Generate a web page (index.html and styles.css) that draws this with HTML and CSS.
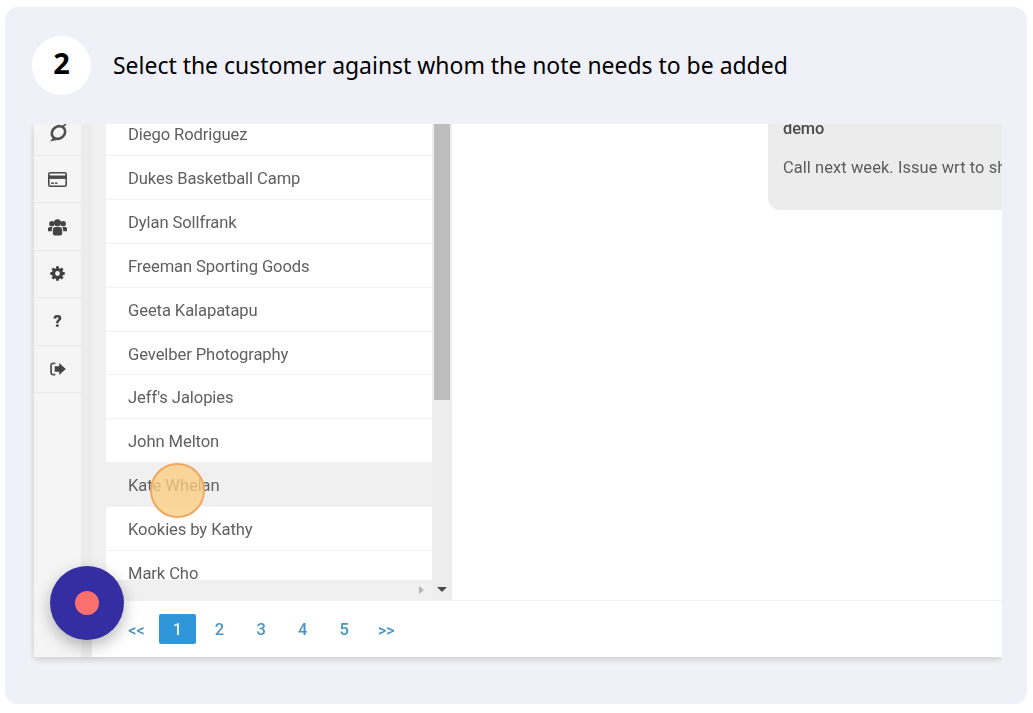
FILE: index.html
```html
<!DOCTYPE html>
<html lang="en">
<head>
    <meta charset="UTF-8">
    <meta name="viewport" content="width=device-width, initial-scale=1.0">
    <title>Step 2</title>
    <link rel="stylesheet" href="styles.css">
</head>
<body>

<div class="card">
    <!-- Step heading -->
    <div class="step-head">
        <div class="step-num">2</div>
        <div class="step-text">Select the customer against whom the note needs to be added</div>
    </div>

    <!-- Captured screen -->
    <div class="shot">
        <div class="app">
            <div class="sidebar">
                <div class="side-item side-first">
                    <svg width="20" height="20" viewBox="0 0 20 20"><ellipse cx="10.5" cy="9.5" rx="7" ry="6" transform="rotate(-35 10.5 9.5)" fill="none" stroke="#505050" stroke-width="2.6"/><path d="M5.5 14 2 18.5 9 17Z" fill="#505050"/><path d="M14 4 18 1" stroke="#505050" stroke-width="1.6"/></svg>
                </div>
                <div class="side-item">
                    <svg width="19" height="15" viewBox="0 0 19 15"><rect x="0.8" y="0.8" width="17.4" height="13.4" rx="1.5" fill="#f5f5f5" stroke="#4a4a4a" stroke-width="1.6"/><rect x="1" y="3.5" width="17" height="3.4" fill="#4a4a4a"/><rect x="3" y="10.5" width="3" height="1.4" fill="#4a4a4a"/><rect x="7" y="10.5" width="2.5" height="1.4" fill="#4a4a4a"/></svg>
                </div>
                <div class="side-item side-users">
                    <svg width="19" height="17" viewBox="0 0 18 16" fill="#444"><circle cx="3.6" cy="4.4" r="2.5"/><circle cx="14.4" cy="4.4" r="2.5"/><circle cx="9" cy="3.6" r="3.4"/><path d="M0 11.5V9C0 8 1 7.5 2 7.5H4.5C3.8 8.5 3.6 9.5 3.6 11.5Z"/><path d="M18 11.5V9C18 8 17 7.5 16 7.5H13.5C14.2 8.5 14.4 9.5 14.4 11.5Z"/><path d="M4.6 14V10.5C4.6 8.5 5.6 7.5 7 7.5H11C12.4 7.5 13.4 8.5 13.4 10.5V14C13.4 15 12.5 15.6 11.5 15.6H6.5C5.5 15.6 4.6 15 4.6 14Z"/></svg>
                </div>
                <div class="side-item">
                    <svg width="15" height="15" viewBox="0 0 15 15"><circle cx="7.5" cy="7.5" r="4" fill="none" stroke="#3f3f3f" stroke-width="3.2"/><path d="M7.5 0.3V3M7.5 12V14.7M0.3 7.5H3M12 7.5H14.7M2.4 2.4 4.3 4.3M10.7 10.7 12.6 12.6M2.4 12.6 4.3 10.7M10.7 4.3 12.6 2.4" stroke="#3f3f3f" stroke-width="2.8"/></svg>
                </div>
                <div class="side-item side-help">?</div>
                <div class="side-item">
                    <svg width="16" height="14" viewBox="0 0 15 13" fill="#444"><path d="M5 1.2H3C1.6 1.2 1 2 1 3.2V9.8C1 11 1.6 11.8 3 11.8H5" fill="none" stroke="#555" stroke-width="1.7"/><path d="M8.6 0.8 14.8 6.5 8.6 12.2V9H4.4V4H8.6Z"/></svg>
                </div>
            </div>

            <div class="panel">
                <div class="panel-main">
                    <div class="customer-col">
                        <ul class="customer-list">
                            <li>Diego Rodriguez</li>
                            <li>Dukes Basketball Camp</li>
                            <li>Dylan Sollfrank</li>
                            <li>Freeman Sporting Goods</li>
                            <li>Geeta Kalapatapu</li>
                            <li>Gevelber Photography</li>
                            <li>Jeff's Jalopies</li>
                            <li>John Melton</li>
                            <li class="hovered">Kate Whelan</li>
                            <li>Kookies by Kathy</li>
                            <li>Mark Cho</li>
                        </ul>
                        <div class="h-scroll">
                            <span class="arrow-right"></span>
                        </div>
                    </div>
                    <div class="v-scroll">
                        <div class="v-thumb"></div>
                        <span class="arrow-down"></span>
                    </div>
                    <div class="notes">
                        <div class="note">
                            <div class="note-author">demo</div>
                            <div class="note-body">Call next week. Issue wrt to sh</div>
                        </div>
                    </div>
                </div>
                <div class="pager">
                    <span class="page-link page-edge">&lt;&lt;</span>
                    <span class="page-link page-on">1</span>
                    <span class="page-link">2</span>
                    <span class="page-link">3</span>
                    <span class="page-link">4</span>
                    <span class="page-link">5</span>
                    <span class="page-link page-edge">&gt;&gt;</span>
                </div>
            </div>
        </div>
    </div>

    <!-- Click marker and recorder button lie over the capture -->
    <div class="click-mark"></div>
    <div class="rec-btn"><span class="rec-dot"></span></div>
</div>

</body>
</html>
```

FILE: styles.css
```css
html, body { margin: 0; padding: 0; background: #fff; }
body { padding: 7px 6px 9px 5px; font-family: "Noto Sans", sans-serif; }

.card { position: relative; height: 697px; background: #eff0f8; border-radius: 13px; overflow: hidden; }

.step-head { display: flex; align-items: center; height: 117px; padding: 0 0 0 27px; box-sizing: border-box; }
.step-num { width: 59px; height: 59px; margin-top: -1px; padding-bottom: 5px; box-sizing: border-box; border-radius: 50%; background: #fff; display: flex; align-items: center; justify-content: center; font-size: 29px; font-weight: 700; color: #000; }
.step-text { margin: -1px 0 0 22px; font-size: 22.94px; color: #000; }

.shot { margin: 0 25px; height: 543px; background: #f3f3f5; overflow: hidden; font-family: Roboto, sans-serif; filter: blur(0.35px); }
.app { display: flex; height: 533px; margin-left: 4px; background: #ececec; box-shadow: 0 2px 8px rgba(0, 0, 0, 0.18); }

.sidebar { width: 47px; flex: none; background: #f5f5f5; }
.side-item { height: 47.4px; border-bottom: 1px solid #e8e8e8; box-sizing: border-box; display: flex; align-items: center; justify-content: center; }
.side-first { height: 32px; padding-bottom: 14px; }
.side-users { padding-top: 2px; }
.side-help { font-size: 17px; font-weight: 900; color: #444; }

.panel { flex: 1; margin-left: 11px; background: #fff; display: flex; flex-direction: column; min-width: 0; }
.panel-main { height: 476px; display: flex; border-bottom: 1px solid #f0f0f0; overflow: hidden; }

.customer-col { width: 340px; flex: none; background: #f0f0f0; display: flex; flex-direction: column; }
.customer-list { list-style: none; margin: -11.6px 0 0 13px; padding: 0; height: 467.6px; overflow: hidden; background: #fff; flex: none; border-left: 1px solid #f2f2f2; box-sizing: border-box; }
.customer-list li { height: 43.85px; box-sizing: border-box; padding-left: 22px; line-height: 45px; font-size: 16.6px; letter-spacing: -0.1px; color: #606060; border-bottom: 1px solid #f2f2f2; }
.customer-list li.hovered { background: #f0f0f0; }

.h-scroll { flex: 1; display: flex; align-items: center; justify-content: flex-end; padding-right: 8px; }
.arrow-right { width: 0; height: 0; border-left: 5px solid #b5b5b5; border-top: 4.5px solid transparent; border-bottom: 4.5px solid transparent; }

.v-scroll { width: 20px; flex: none; background: #ededed; display: flex; flex-direction: column; align-items: center; }
.v-thumb { width: 16px; height: 276px; background: #bdbdbd; }
.arrow-down { margin-top: auto; margin-bottom: 8px; width: 0; height: 0; border-top: 5px solid #4a4a4a; border-left: 5px solid transparent; border-right: 5px solid transparent; }

.notes { flex: 1; min-width: 0; background: #fff; overflow: hidden; padding-left: 316px; }
.note { height: 86px; padding: 0 0 0 15px; background: #ececec; border-radius: 0 0 0 12px; white-space: nowrap; overflow: hidden; font-size: 16.4px; color: #5c5c5c; }
.note-author { line-height: 22px; margin-top: -6px; font-weight: 500; letter-spacing: -0.1px; color: #4a4a4a; }
.note-body { margin-top: 17px; line-height: 22px; letter-spacing: 0.1px; }

.pager { flex: 1; display: flex; align-items: center; padding: 0 0 0 35px; background: #fff; font-size: 16.5px; font-weight: 500; color: #4b94c1; }
.page-link { width: 37px; margin-right: 4.6px; height: 30px; display: flex; align-items: center; justify-content: center; border-radius: 2px; box-sizing: border-box; }
.page-edge { width: 19px; margin-right: 13px; font-size: 16px; padding-top: 3px; }
.page-on { background: #2e96d9; color: #e9f4fb; margin-right: 5px; }
.page-link:nth-last-child(2) { margin-right: 14px; }

.click-mark { position: absolute; left: 145px; top: 456px; width: 55px; height: 55px; box-sizing: border-box; border-radius: 50%; background: rgba(253, 205, 130, 0.78); border: 2px solid #f0a860; }
.rec-btn { position: absolute; left: 45px; top: 559px; width: 74px; height: 74px; border-radius: 50%; background: #352ea2; box-shadow: 0 6px 16px rgba(0, 0, 0, 0.28); display: flex; align-items: center; justify-content: center; }
.rec-dot { width: 24px; height: 24px; border-radius: 50%; background: #fb6f6f; }
```
